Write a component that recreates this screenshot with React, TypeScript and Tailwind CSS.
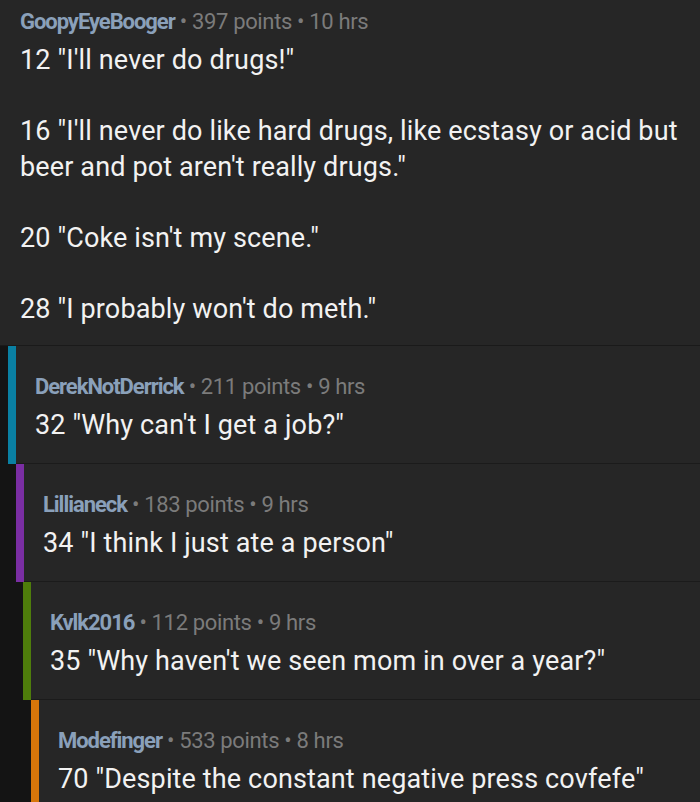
type Comment = {
  user: string;
  points: number;
  age: string;
  body: string;
  depth: number;
  bar?: string;
};

const comments: Comment[] = [
  {
    user: "DerekNotDerrick",
    points: 211,
    age: "9 hrs",
    body: '32 "Why can\'t I get a job?"',
    depth: 0,
    bar: "bg-[#0a80a3]",
  },
  {
    user: "Lillianeck",
    points: 183,
    age: "9 hrs",
    body: '34 "I think I just ate a person"',
    depth: 1,
    bar: "bg-[#7a2ea3]",
  },
  {
    user: "Kvlk2016",
    points: 112,
    age: "9 hrs",
    body: '35 "Why haven\'t we seen mom in over a year?"',
    depth: 2,
    bar: "bg-[#4e7d0b]",
  },
  {
    user: "Modefinger",
    points: 533,
    age: "8 hrs",
    body: '70 "Despite the constant negative press covfefe"',
    depth: 3,
    bar: "bg-[#d7760a]",
  },
];

const indents = ["w-[8px]", "w-[16px]", "w-[23px]", "w-[31px]"];

function Meta({ user, points, age }: { user: string; points: number; age: string }) {
  return (
    <div className="text-[22px] leading-[24px] whitespace-nowrap">
      <span className="font-bold tracking-[-0.048em] text-[#8aa0ba]">{user}</span>
      <span className="tracking-[-0.016em] text-[#7b7b7b]">
        {" "}• {points} points • {age}
      </span>
    </div>
  );
}

export default function App() {
  return (
    <div
      className="w-[700px] h-[802px] overflow-hidden bg-[#141414]"
      style={{ fontFamily: "Roboto, 'Open Sans', sans-serif" }}
    >
      {/* parent comment */}
      <div className="bg-[#262626] border-b border-[#1a1a1a] pl-[20px] pr-[4px] pt-[10px] pb-[18px]">
        <Meta user="GoopyEyeBooger" points={397} age="10 hrs" />
        <p className="mt-[9px] text-[27px] leading-[35.5px] tracking-[0.005em] text-[#f2f2f2] whitespace-pre-line">
          {'12 "I\'ll never do drugs!"\n\n16 "I\'ll never do like hard drugs, like ecstasy or acid but\nbeer and pot aren\'t really drugs."\n\n20 "Coke isn\'t my scene."\n\n28 "I probably won\'t do meth."'}
        </p>
      </div>

      {/* reply chain */}
      {comments.map((c) => (
        <div key={c.user} className="flex h-[118px]">
          <div className={`${indents[c.depth]} shrink-0 bg-[#141414]`} />
          <div className={`w-[8px] shrink-0 ${c.bar}`} />
          <div className="flex-1 bg-[#262626] border-b border-[#1b1b1b] pl-[19px] pt-[29px]">
            <Meta user={c.user} points={c.points} age={c.age} />
            <p className="mt-[9px] text-[27px] leading-[35.5px] tracking-[0.005em] text-[#f2f2f2] whitespace-nowrap">
              {c.body}
            </p>
          </div>
        </div>
      ))}
    </div>
  );
}
